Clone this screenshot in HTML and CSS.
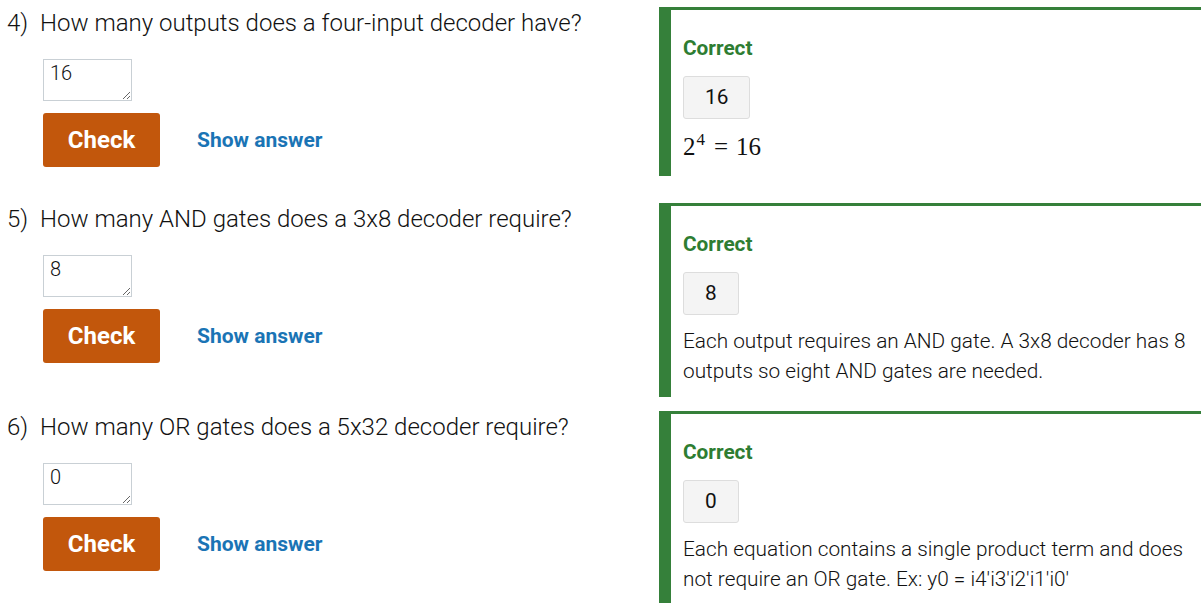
FILE: index.html
```html
<!DOCTYPE html>
<html lang="en">
<head>
<meta charset="utf-8">
<title>Decoder questions</title>
<link rel="stylesheet" href="styles.css">
</head>
<body>
<div class="page">
  <div class="row">
    <div class="question">
      <div class="prompt"><span class="num">4)</span><span class="text">How many outputs does a four-input decoder have?</span></div>
      <textarea class="answer-input">16</textarea>
      <div class="actions">
        <button class="check">Check</button>
        <span class="show">Show answer</span>
      </div>
    </div>
    <div class="feedback">
      <div class="status">Correct</div>
      <div class="given">16</div>
      <div class="math"><span class="mn">2</span><sup class="sup">4</sup><span class="eq">=</span><span class="mn">16</span></div>
    </div>
  </div>

  <div class="row">
    <div class="question">
      <div class="prompt"><span class="num">5)</span><span class="text">How many AND gates does a 3x8 decoder require?</span></div>
      <textarea class="answer-input">8</textarea>
      <div class="actions">
        <button class="check">Check</button>
        <span class="show">Show answer</span>
      </div>
    </div>
    <div class="feedback">
      <div class="status">Correct</div>
      <div class="given">8</div>
      <p class="explain">Each output requires an AND gate. A 3x8 decoder has 8 outputs so eight AND gates are needed.</p>
    </div>
  </div>

  <div class="row">
    <div class="question">
      <div class="prompt"><span class="num">6)</span><span class="text">How many OR gates does a 5x32 decoder require?</span></div>
      <textarea class="answer-input">0</textarea>
      <div class="actions">
        <button class="check">Check</button>
        <span class="show">Show answer</span>
      </div>
    </div>
    <div class="feedback">
      <div class="status">Correct</div>
      <div class="given">0</div>
      <p class="explain">Each equation contains a single product term and does not require an OR gate. Ex: y0 = i4'i3'i2'i1'i0'</p>
    </div>
  </div>
</div>
</body>
</html>
```

FILE: styles.css
```css
html, body {
  margin: 0;
  padding: 0;
  overflow: hidden;
  background: #ffffff;
}

body {
  font-family: Roboto, "Liberation Sans", sans-serif;
  color: #222222;
}

.page {
  padding-top: 7px;
}

.row {
  display: flex;
  align-items: flex-start;
  margin-bottom: 14px;
}

.question {
  width: 659px;
  flex: none;
  min-height: 182px;
  box-sizing: border-box;
  padding-left: 7px;
}

.prompt {
  display: flex;
  margin-top: 1px;
  font-size: 24px;
  font-weight: 300;
  line-height: 30px;
  color: #111111;
}

.num {
  width: 33px;
  flex: none;
}

.answer-input {
  display: block;
  box-sizing: border-box;
  width: 89px;
  height: 42px;
  margin: 21px 0 0 36px;
  padding: 1px 6px;
  border: 1px solid #c9d0d5;
  border-radius: 0;
  font-family: Roboto, "Liberation Sans", sans-serif;
  font-size: 20px;
  font-weight: 300;
  line-height: 24px;
  color: #111111;
  resize: both;
  overflow: hidden;
}

.actions {
  display: flex;
  align-items: center;
  gap: 37px;
  margin: 12px 0 0 36px;
}

.check {
  width: 117px;
  height: 54px;
  border: none;
  border-radius: 3px;
  background: #c2570c;
  color: #ffffff;
  font-family: Roboto, "Liberation Sans", sans-serif;
  font-weight: 700;
  font-size: 24px;
  padding: 0;
}

.show {
  color: #1a74b5;
  font-weight: 700;
  font-size: 21px;
}

.feedback {
  flex: none;
  width: 556px;
  box-sizing: border-box;
  border-left: 12px solid #35803a;
  border-top: 3px solid #35803a;
  padding: 23px 12px 11px 12px;
}

.status {
  color: #2e7d32;
  font-weight: 700;
  font-size: 20.8px;
  line-height: 30px;
}

.given {
  display: inline-block;
  margin-top: 13px;
  padding: 8px 21px;
  font-size: 20.8px;
  line-height: 25px;
  background: #f4f4f4;
  border: 1px solid #dddddd;
  border-radius: 3px;
  color: #111111;
}

.math {
  margin: 13px 0 3px;
  font-family: "Liberation Serif", "DejaVu Serif", serif;
  font-size: 25px;
  line-height: 30px;
  color: #111111;
}

.sup {
  font-size: 17px;
  vertical-align: 10px;
  line-height: 0;
  margin-left: 1px;
}

.eq {
  margin: 0 8px 0 9px;
}

.explain {
  margin: 11px 0 0;
  font-size: 20.8px;
  font-weight: 300;
  line-height: 30px;
  color: #111111;
}
```
